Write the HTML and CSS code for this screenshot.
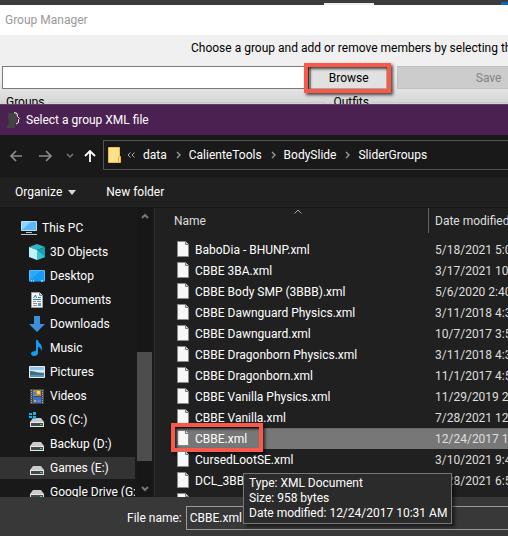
FILE: index.html
```html
<!DOCTYPE html>
<html lang="en">
<head>
<meta charset="utf-8">
<title>Group Manager</title>
<link rel="stylesheet" href="styles.css">
</head>
<body>
<svg class="defs" aria-hidden="true">
  <symbol id="file" viewBox="0 0 12 16"><path d="M.5.5h8l3 3v12H.5z" fill="#f7f8f9" stroke="#8b8b8b"/><path d="M8.5.5v3h3" fill="#ddd" stroke="#777"/></symbol>
  <symbol id="drive" viewBox="0 0 16 16"><path d="M4 6h8l3 4H1z" fill="#c9cbcd"/><path d="M1 10h14v5H1z" fill="#e4e6e7"/><path d="M2 11h12v3H2z" fill="#45484b"/><path d="M11 12h2v1h-2z" fill="#3be04a"/></symbol>
</svg>
<section class="manager">
  <div class="backdrop"><i class="tab"></i><i class="accent"></i></div>
  <header class="manager-title">Group Manager</header>
  <div class="manager-body">
    <p class="hint">Choose a group and add or remove members by selecting them</p>
    <div class="source">
      <input class="path" type="text" aria-label="Group file">
      <div class="browse-wrap"><button class="browse" type="button">Browse</button><span class="callout callout-browse"></span></div>
      <button class="save" type="button" disabled>Save</button>
    </div>
    <div class="groups">
      <fieldset class="group"><legend>Groups</legend></fieldset>
      <fieldset class="group outfits"><legend>Outfits</legend></fieldset>
    </div>
  </div>
</section>
<main class="dialog">
  <header class="dialog-title">
    <svg width="14" height="17" viewBox="0 0 14 17"><path d="M1 1h7l2 3v6l-2 1v5H0v-2l2-3-1-5z" fill="#434343"/><path d="M7 .5l3 1 .5 3 2 2-1 1v3L9 12" fill="none" stroke="#fff"/></svg>
    <span>Select a group XML file</span>
  </header>
  <nav class="nav">
    <button class="nav-btn" type="button" aria-label="Back"><svg width="14" height="12" viewBox="0 0 14 12"><path d="M13 6H2M7 1L2 6l5 5" stroke="#8c8c8c" stroke-width="1.7"/></svg></button>
    <button class="nav-btn forward" type="button" aria-label="Forward"><svg width="14" height="12" viewBox="0 0 14 12"><path d="M0 6h12M7 1l5 5-5 5" stroke="#8c8c8c" stroke-width="1.7"/></svg></button>
    <button class="nav-btn recent" type="button" aria-label="Recent locations"><svg width="8" height="6" viewBox="0 0 8 6"><path d="M1 1l3 3 3-3" stroke="#777" stroke-width="1.5"/></svg></button>
    <button class="nav-btn up" type="button" aria-label="Up"><svg width="12" height="12" viewBox="0 0 12 12"><path d="M6 12V1M1 6l5-5 5 5" stroke="#fff" stroke-width="1.8"/></svg></button>
    <div class="address">
      <svg width="14" height="16" viewBox="0 0 14 16"><path d="M.5.5h11v9h1v6H.5z" fill="#ffe18b" stroke="#e9bc45"/><path d="M10.500 10v5" stroke="#e0a91f"/></svg>
      <svg class="more" width="8" height="6" viewBox="0 0 8 6"><path d="M3.500.5L1 3l2.500 2.500M7.500.5L5 3l2.500 2.500" stroke="#aaa"/></svg>
      <a class="crumb" href="#">data</a>
      <svg class="sep" width="5" height="8" viewBox="0 0 5 8"><path d="M1 1l3 3-3 3" stroke="#999" stroke-width="1.4"/></svg>
      <a class="crumb" href="#">CalienteTools</a>
      <svg class="sep" width="5" height="8" viewBox="0 0 5 8"><path d="M1 1l3 3-3 3" stroke="#999" stroke-width="1.4"/></svg>
      <a class="crumb" href="#">BodySlide</a>
      <svg class="sep" width="5" height="8" viewBox="0 0 5 8"><path d="M1 1l3 3-3 3" stroke="#999" stroke-width="1.4"/></svg>
      <a class="crumb" href="#">SliderGroups</a>
    </div>
  </nav>
  <div class="toolbar">
    <button class="tool" type="button">Organize <svg width="8" height="5" viewBox="0 0 8 5"><path d="M0 0h8L4 5z" fill="#d8d8d8"/></svg></button>
    <button class="tool" type="button">New folder</button>
  </div>
  <div class="panes">
    <aside class="sidebar">
      <ul class="tree">
        <li class="root"><svg width="16" height="16" viewBox="0 0 16 16"><path d="M.5 1.500h15v9H.5z" fill="#59b8f5" stroke="#b9dff5"/><path d="M1 10L10 2H1z" fill="#8dd4ff"/><path d="M5 12h6v1H5zM0 14h16v1H0z" fill="#bcc6cc"/></svg>This PC</li>
        <li><svg width="16" height="16" viewBox="0 0 16 16"><path d="M0 3l8-3 8 3-8 3z" fill="#33b5c9"/><path d="M0 3l8 3v10l-8-3z" fill="#bff3f6"/><path d="M16 3L8 6v10l8-3z" fill="#159db3"/><path d="M8 6l8 7-8 3z" fill="#35c4d4"/></svg>3D Objects</li>
        <li><svg width="16" height="16" viewBox="0 0 16 16"><path d="M.5 2.500h15v11H.5z" fill="#149bf5" stroke="#54baf9"/><path d="M1 12L12 3H1z" fill="#2ba8fb"/><path d="M0 13h16v1H0z" fill="#0867b5"/><path d="M2 13h1M4 13h1M12 13h2" stroke="#fff"/></svg>Desktop</li>
        <li><svg width="16" height="16" viewBox="0 0 16 16"><path d="M2.500.5h8l3 3v12h-11z" fill="#f7f7f7" stroke="#a0a0a0"/><path d="M10.500.5v3h3" fill="#ddd" stroke="#888"/><path d="M4.500 6l2-3 1 3M9 5.500h3M4 7.500h8" fill="none" stroke="#2387cf"/><path d="M4 9.500h3M8 9.500h4M4 11.500h4M4 13.500h4" stroke="#8a929a"/><path d="M9 11h3v3H9z" fill="#4c9ddd"/></svg>Documents</li>
        <li><svg width="16" height="16" viewBox="0 0 16 16"><path d="M5 0h6v8h5l-8 8-8-8h5z" fill="#3b8fdb"/></svg>Downloads</li>
        <li><svg width="16" height="16" viewBox="0 0 16 16"><path d="M7 0h2c0 3 4 4 4 8 0 1-.5 2-1 3 0-3-1-4-3-4v6c0 2-2 3-4 3s-3-1-3-2.500S4 11 7 11z" fill="#129cf5"/></svg>Music</li>
        <li><svg width="16" height="16" viewBox="0 0 16 16"><path d="M.5 2.500h15v11H.5z" fill="#8bc8ed" stroke="#eee"/><path d="M1 6h14v2H1z" fill="#d9edf5"/><path d="M1 7c5 0 9 3 14 2v4H1z" fill="#3f6f83"/><path d="M1 11h14v2H1z" fill="#5794b5"/></svg>Pictures</li>
        <li><svg width="16" height="16" viewBox="0 0 16 16"><path d="M1 1h14v15H1z" fill="#494949"/><path d="M4 2h8v6H4z" fill="#b08a5c"/><path d="M4 9h8v6H4z" fill="#356fcf"/><path d="M8 3h3v3H8z" fill="#ffd332"/><path d="M4 4h3v3H4zM8 12h4v2H8z" fill="#4b82df"/><path d="M5 12h2v2H5z" fill="#e1a84b"/><path d="M2.500 2v14M13.500 2v14" stroke="#aaa" stroke-dasharray="1 1"/></svg>Videos</li>
        <li><svg width="16" height="16" viewBox="0 0 16 16"><use href="#drive"/><path d="M0 1h3v2H0zM4 0h3v3H4zM0 4h3v2H0zM4 4h3v3H4z" fill="#10b6f1"/></svg>OS (C:)</li>
        <li><svg width="16" height="16"><use href="#drive"/></svg>Backup (D:)</li>
        <li class="current"><svg width="16" height="16"><use href="#drive"/></svg>Games (E:)</li>
        <li><svg width="16" height="16"><use href="#drive"/></svg>Google Drive (G:)</li>
      </ul>
      <div class="scrollbar">
        <svg width="8" height="7" viewBox="0 0 8 7"><path d="M1 5l3-3 3 3" stroke="#777" stroke-width="2"/></svg>
        <i class="thumb"></i>
        <svg width="8" height="7" viewBox="0 0 8 7"><path d="M1 2l3 3 3-3" stroke="#777" stroke-width="2"/></svg>
      </div>
    </aside>
    <div class="files">
      <table class="list">
        <thead><tr><th class="name">Name<svg class="sort" width="8" height="5" viewBox="0 0 8 5"><path d="M.5 4.500L4 1l3.500 3.500" stroke="#aaa"/></svg></th><th class="date">Date modified</th></tr></thead>
        <tbody>
          <tr><td><svg width="12" height="16"><use href="#file"/></svg>BaboDia - BHUNP.xml</td><td>5/18/2021 5:06 PM</td></tr>
          <tr><td><svg width="12" height="16"><use href="#file"/></svg>CBBE 3BA.xml</td><td>3/17/2021 10:02 AM</td></tr>
          <tr><td><svg width="12" height="16"><use href="#file"/></svg>CBBE Body SMP (3BBB).xml</td><td>5/6/2020 2:40 PM</td></tr>
          <tr><td><svg width="12" height="16"><use href="#file"/></svg>CBBE Dawnguard Physics.xml</td><td>3/11/2018 4:34 PM</td></tr>
          <tr><td><svg width="12" height="16"><use href="#file"/></svg>CBBE Dawnguard.xml</td><td>10/7/2017 3:59 PM</td></tr>
          <tr><td><svg width="12" height="16"><use href="#file"/></svg>CBBE Dragonborn Physics.xml</td><td>3/11/2018 4:34 PM</td></tr>
          <tr><td><svg width="12" height="16"><use href="#file"/></svg>CBBE Dragonborn.xml</td><td>11/1/2017 4:58 PM</td></tr>
          <tr><td><svg width="12" height="16"><use href="#file"/></svg>CBBE Vanilla Physics.xml</td><td>11/29/2019 2:57 PM</td></tr>
          <tr><td><svg width="12" height="16"><use href="#file"/></svg>CBBE Vanilla.xml</td><td>7/28/2021 12:28 PM</td></tr>
          <tr class="selected"><td><svg width="12" height="16"><use href="#file"/></svg>CBBE.xml<span class="callout callout-file"></span></td><td>12/24/2017 10:31 AM</td></tr>
          <tr><td><svg width="12" height="16"><use href="#file"/></svg>CursedLootSE.xml</td><td>3/10/2021 9:44 PM</td></tr>
          <tr><td><svg width="12" height="16"><use href="#file"/></svg>DCL_3BBB.xml</td><td>7/28/2021 6:53 PM</td></tr>
          <tr><td><svg width="12" height="16"><use href="#file"/></svg></td><td></td></tr>
        </tbody>
      </table>
    </div>
  </div>
  <footer class="footer">
    <label for="filename">File name:</label>
    <input id="filename" class="filename" type="text" value="CBBE.xml">
    <div class="tooltip" role="tooltip">Type: XML Document<br>Size: 958 bytes<br>Date modified: 12/24/2017 10:31 AM</div>
  </footer>
</main>
</body>
</html>
```
FILE: styles.css
```css
* { box-sizing: border-box; }
body, button, input {
  font-family: Roboto, "Open Sans", sans-serif;
  font-size: 12px;
  line-height: 16px;
}
body {
  display: flex;
  flex-direction: column;
  height: 100vh;
  margin: 0;
  overflow: hidden;
  background: #191919;
  color: #fff;
  white-space: nowrap;
}
svg { display: block; flex: none; fill: none; }
button { padding: 0; border: 0; background: none; color: inherit; }
.defs { position: absolute; width: 0; height: 0; }

.manager { flex: none; height: 104px; overflow: hidden; background: #f0f0f0; color: #000; }
.backdrop { display: flex; align-items: flex-end; height: 5px; background: #3b3b3b; }
.tab { width: 50px; height: 2px; margin-left: auto; background: #eee; }
.accent { width: 7px; height: 3px; margin-left: 127px; background: #0868bd; }
.manager-title { height: 30px; padding: 7px 5px; background: #fff; color: #999; }
.manager-body { height: 69px; padding: 5px 0 0 2px; background: linear-gradient(#f0f0f0 60%, #d4d4d4); }
.hint { margin: 0 0 10px 189px; }
.source { display: flex; height: 23px; margin-right: -72px; }
.path { flex: 304 1 0; min-width: 0; padding: 0 4px; border: 1px solid #7a7a7a; background: #fff; }
.browse-wrap { position: relative; flex: 79 1 0; padding-left: 1px; }
.browse { width: 100%; height: 23px; border: 1px solid #adadad; background: #e1e1e1; }
.save { flex: 185 1 0; height: 23px; margin-left: 10px; border: 1px solid #bfbfbf; background: #ccc; color: #838383; }
.groups { display: flex; gap: 4px; margin-top: 5px; }
.group { flex: 324 1 0; height: 30px; margin: 0; padding: 0; border: 1px solid #c8c8c8; }
.outfits { flex-grow: 178; }
.group legend { padding: 0 3px; }

/* The outline's left edge sits over the end of the path box. */
.callout { position: absolute; border: 4px solid #f9594b; box-shadow: 2px 2px 3px rgba(0, 0, 0, .7), inset 2px 2px 3px rgba(0, 0, 0, .7); pointer-events: none; }
.callout-browse { inset: -3px -4px -4px -5px; }
.callout-file { top: -5px; left: -1px; width: 92px; height: 29px; }

.dialog { display: flex; flex: 1; flex-direction: column; min-height: 0; }
.dialog-title { display: flex; flex: none; align-items: center; gap: 5px; height: 31px; padding-left: 7px; border-top: 1px solid #5e3a66; background: #4b2151; }
.nav { display: flex; flex: none; align-items: center; height: 42px; padding-left: 9px; background: #191919; }
.nav-btn { display: flex; }
.forward { margin-left: 16px; }
.recent { margin-left: 13px; }
.up { margin-left: 10px; }
.address { display: flex; flex: 1; align-items: center; height: 30px; margin: 0 -2px 2px 7px; padding-left: 4px; border: 1px solid #535353; }
.more { margin: 0 8px 0 5px; }
.crumb { color: #fff; text-decoration: none; }
.sep { margin: 0 8px 0 9px; }
.toolbar { display: flex; flex: none; align-items: center; gap: 30px; height: 31px; padding-left: 15px; border-bottom: 1px solid #171717; background: #202020; }
.tool { display: flex; align-items: center; gap: 6px; }

.panes { display: flex; flex: 1; min-height: 0; overflow: hidden; }
.sidebar { display: flex; flex: none; width: 155px; border-right: 1px solid #2b2b2b; background: #191919; }
.tree { width: 135px; margin: 0; padding: 8px 0 0; overflow: hidden; list-style: none; }
.tree li { display: flex; align-items: center; gap: 5px; height: 24px; padding-left: 29px; }
.tree .root { padding-left: 21px; }
.tree .current { padding: 1px 0; background: #333 content-box; }
.tree .current svg { margin-left: 29px; }
.scrollbar { display: flex; flex-direction: column; align-items: center; width: 15px; margin-left: 2px; padding: 5px 0; background: #171717; }
.thumb { width: 15px; height: 109px; margin: auto 0 24px; background: #4d4d4d; }

.files { flex: 1; min-width: 0; padding-left: 17px; overflow: hidden; background: #202020; }
.list { width: 100%; border-collapse: collapse; table-layout: fixed; }
.list th { height: 31px; padding: 0 0 5px 2px; font-weight: 400; text-align: left; color: #dedede; }
.list .name { position: relative; width: 257px; background: linear-gradient(#636363, #636363) right top / 1px 25px no-repeat; }
.sort { position: absolute; top: 1px; left: 122px; }
.list td { position: relative; height: 21px; padding: 0 0 0 23px; }
.list td:first-child svg { position: absolute; top: 2px; left: 5px; }
.list th:last-child, .list td:last-child { padding-left: 6px; color: #dedede; }
.list .selected { background: #777; box-shadow: inset 0 1px #666; }

.footer { position: relative; display: flex; flex: none; align-items: flex-start; gap: 4px; height: 39px; padding: 9px 0 0 127px; background: #383838; }
.footer label { line-height: 24px; }
.filename { flex: 1; min-width: 0; height: 24px; margin-right: -2px; padding: 0 3px; border: 1px solid #9b9b9b; background: #383838; color: #fff; }
.tooltip { position: absolute; bottom: 12px; left: 243px; padding: 2px 4px 2px 5px; border: 1px solid #767676; background: #2b2b2b; line-height: 15px; box-shadow: 3px 3px 3px rgba(0, 0, 0, .5); }
```
